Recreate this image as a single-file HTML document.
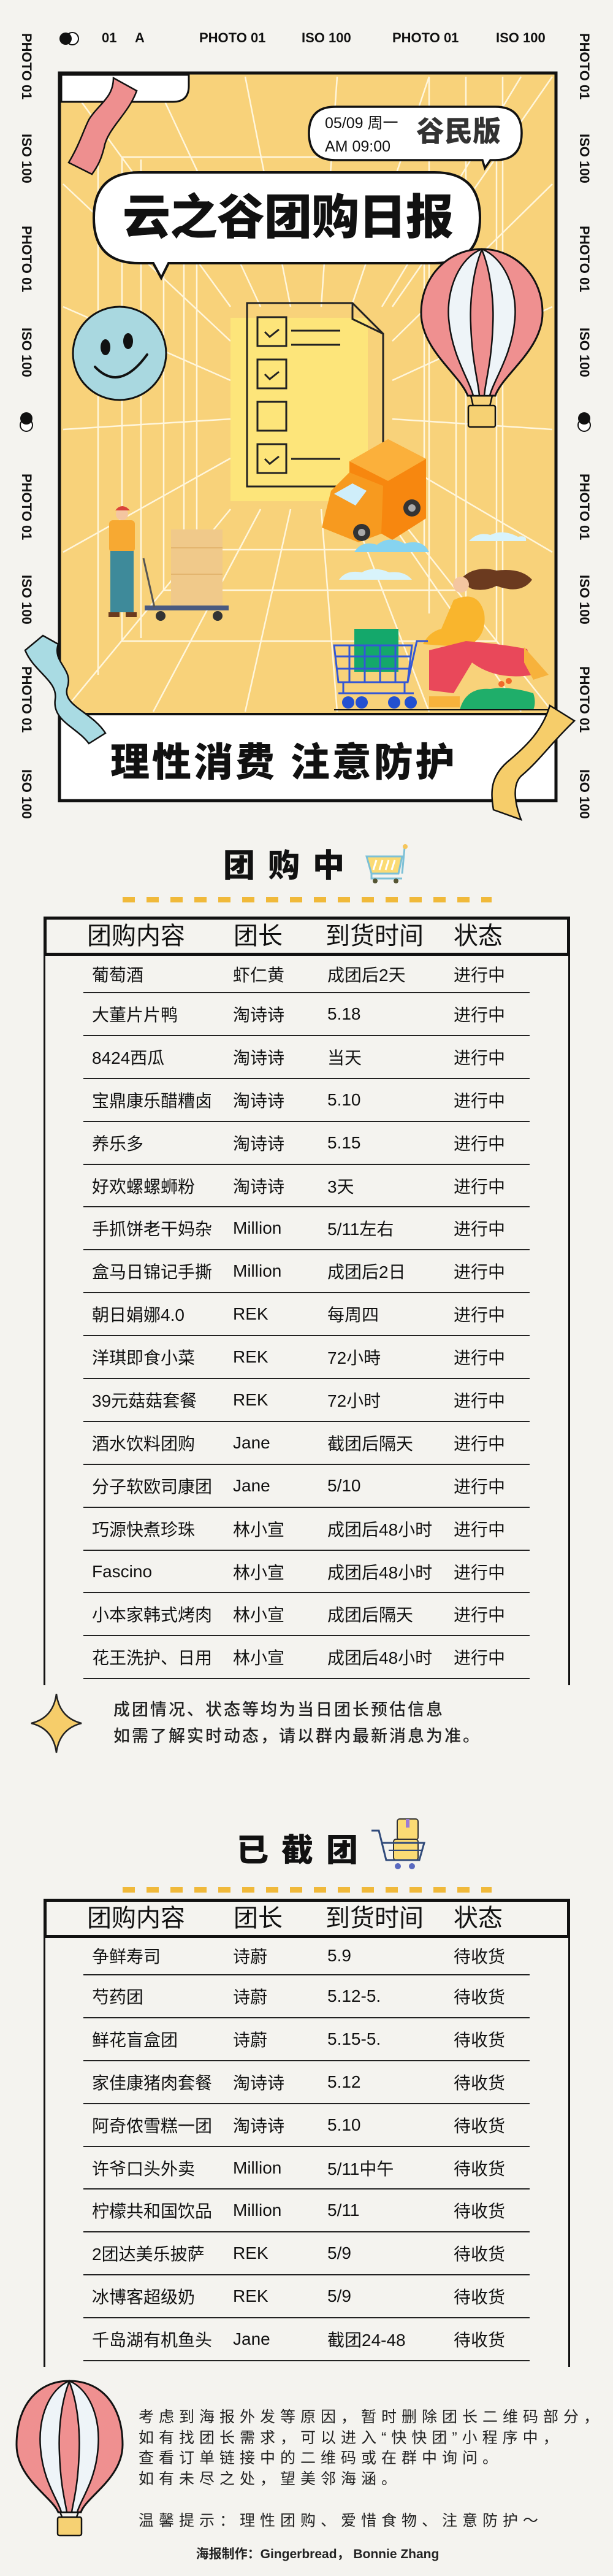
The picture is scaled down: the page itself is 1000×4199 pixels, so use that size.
<!DOCTYPE html>
<html><head><meta charset="utf-8">
<style>
*{margin:0;padding:0;box-sizing:border-box}
html,body{width:1000px;height:4199px;background:#f4f3ef;overflow:hidden}
body{position:relative;font-family:"Liberation Sans","Noto Sans CJK SC",sans-serif;color:#111}
.abs{position:absolute}
.lab{position:absolute;font:bold 22px "Liberation Sans",sans-serif;color:#111;white-space:nowrap;line-height:24px}
.v{writing-mode:vertical-rl;line-height:24px}
.sec{position:absolute;font:900 52px "Liberation Sans","Noto Sans CJK SC",sans-serif;letter-spacing:21px;white-space:nowrap;line-height:60px}
.dashes{position:absolute;left:200px;width:602px;height:9px;background:repeating-linear-gradient(90deg,#f0b93a 0 20px,transparent 20px 39px)}
.thead{position:absolute;left:71px;width:859px;height:64px;border:5px solid #111;background:#f4f3ef}
.thead span{position:absolute;top:0;line-height:54px;font-size:40px;font-family:"Liberation Sans","Noto Sans CJK SC",sans-serif}
.tbody{position:absolute;left:71px;width:859px;border-left:3px solid #111;border-right:3px solid #111}
.row{position:relative;height:69.9px}
.row.first{height:61px}
.row::after{content:"";position:absolute;left:62px;width:728px;bottom:0;height:2px;background:#222}
.row span{position:absolute;top:0;bottom:2px;display:flex;align-items:center;font-size:28px;white-space:nowrap;font-family:"Liberation Sans","Noto Sans CJK SC",sans-serif}
.c1{left:76px}.c2{left:306px}.c3{left:460px}.c4{left:666px}
.note{position:absolute;left:185px;font-size:27px;font-weight:500;letter-spacing:3px;white-space:nowrap;line-height:43px;color:#222}
.fin{position:absolute;left:226px;top:3924px;font-size:25px;letter-spacing:8px;line-height:33.7px;white-space:nowrap;color:#222}
</style></head><body>

<svg class="abs" style="left:94px;top:50px" width="40" height="26"><circle cx="24" cy="13" r="10" fill="#fff" stroke="#111" stroke-width="2"/><circle cx="13" cy="13" r="10" fill="#111"/></svg>
<div class="lab" style="left:166px;top:50px">01</div>
<div class="lab" style="left:220px;top:50px">A</div>
<div class="lab" style="left:325px;top:50px">PHOTO 01</div>
<div class="lab" style="left:492px;top:50px">ISO 100</div>
<div class="lab" style="left:640px;top:50px">PHOTO 01</div>
<div class="lab" style="left:809px;top:50px">ISO 100</div>

<div class="lab v" style="left:31px;top:54px">PHOTO 01</div>
<div class="lab v" style="left:31px;top:218px">ISO 100</div>
<div class="lab v" style="left:31px;top:368px">PHOTO 01</div>
<div class="lab v" style="left:31px;top:534px">ISO 100</div>
<svg class="abs" style="left:30px;top:668px" width="26" height="40"><circle cx="13" cy="25" r="10" fill="#fff" stroke="#111" stroke-width="2"/><circle cx="13" cy="14" r="10" fill="#111"/></svg>
<div class="lab v" style="left:31px;top:772px">PHOTO 01</div>
<div class="lab v" style="left:31px;top:937px">ISO 100</div>
<div class="lab v" style="left:31px;top:1086px">PHOTO 01</div>
<div class="lab v" style="left:31px;top:1254px">ISO 100</div>
<div class="lab v" style="left:941px;top:54px">PHOTO 01</div>
<div class="lab v" style="left:941px;top:218px">ISO 100</div>
<div class="lab v" style="left:941px;top:368px">PHOTO 01</div>
<div class="lab v" style="left:941px;top:534px">ISO 100</div>
<svg class="abs" style="left:940px;top:668px" width="26" height="40"><circle cx="13" cy="25" r="10" fill="#fff" stroke="#111" stroke-width="2"/><circle cx="13" cy="14" r="10" fill="#111"/></svg>
<div class="lab v" style="left:941px;top:772px">PHOTO 01</div>
<div class="lab v" style="left:941px;top:937px">ISO 100</div>
<div class="lab v" style="left:941px;top:1086px">PHOTO 01</div>
<div class="lab v" style="left:941px;top:1254px">ISO 100</div>

<svg class="abs" style="left:0;top:0" width="1000" height="1400" viewBox="0 0 1000 1400">
<rect x="97" y="119" width="810" height="1186" fill="#f8d27a"/>
<g stroke="#fff6dc" stroke-width="2.5" fill="none">
<rect x="199" y="256" width="611" height="789"/>
<rect x="267" y="350" width="477" height="612"/>
<rect x="321" y="425" width="371" height="471"/>
<line x1="103" y1="125" x2="376" y2="500"/><line x1="901" y1="125" x2="640" y2="500"/>
<line x1="103" y1="1160" x2="376" y2="830"/><line x1="901" y1="1160" x2="640" y2="830"/>
<line x1="250" y1="1160" x2="425" y2="830"/><line x1="400" y1="1160" x2="474" y2="830"/><line x1="550" y1="1160" x2="524" y2="830"/><line x1="700" y1="1160" x2="573" y2="830"/><line x1="850" y1="1160" x2="623" y2="830"/>
<line x1="250" y1="125" x2="425" y2="500"/><line x1="400" y1="125" x2="474" y2="500"/><line x1="550" y1="125" x2="524" y2="500"/><line x1="700" y1="125" x2="573" y2="500"/><line x1="850" y1="125" x2="623" y2="500"/>
<line x1="103" y1="300" x2="376" y2="556"/><line x1="103" y1="500" x2="376" y2="620"/><line x1="103" y1="700" x2="376" y2="683"/><line x1="103" y1="900" x2="376" y2="747"/>
<line x1="901" y1="300" x2="640" y2="556"/><line x1="901" y1="500" x2="640" y2="620"/><line x1="901" y1="700" x2="640" y2="683"/><line x1="901" y1="900" x2="640" y2="747"/>
<line x1="700" y1="125" x2="700" y2="1000"/><line x1="760" y1="125" x2="760" y2="1050"/><line x1="820" y1="125" x2="820" y2="1100"/>
<line x1="160" y1="200" x2="160" y2="1100"/><line x1="230" y1="260" x2="230" y2="1040"/><line x1="300" y1="350" x2="300" y2="960"/>
</g>
<path d="M100,122 H308 V140 Q308,166 282,166 H100Z" fill="#fff" stroke="#111" stroke-width="3"/>
<path d="M185,127 L223,148 C210,185 175,210 170,240 C165,260 160,270 150,284 L112,265 C130,235 135,215 145,195 C160,170 185,160 185,127Z" fill="#ee8f8f" stroke="#111" stroke-width="2.5"/>
<path d="M547,174 H808 Q851,174 851,217 Q851,261 808,261 H800 L791,274 L787,261 H547 Q504,261 504,217 Q504,174 547,174Z" fill="#fff" stroke="#111" stroke-width="3.5"/>
<path d="M227,281 H709 Q783,281 783,355 Q783,429 709,429 H275 L263,453 L250,429 H227 Q153,429 153,355 Q153,281 227,281Z" fill="#fff" stroke="#111" stroke-width="4"/>
<circle cx="195" cy="576" r="76" fill="#a9d8e0" stroke="#111" stroke-width="3"/>
<ellipse cx="172" cy="566" rx="8" ry="13" fill="#111"/><ellipse cx="209" cy="556" rx="8" ry="13" fill="#111"/>
<path d="M155,598 Q195,640 240,578" fill="none" stroke="#111" stroke-width="4" stroke-linecap="round"/>
<rect x="376" y="518" width="224" height="299" fill="#fde57a"/>
<path d="M403,494 H575 L625,544 V793 H403Z" fill="none" stroke="#222" stroke-width="3"/>
<path d="M575,494 V520 L625,544" fill="none" stroke="#222" stroke-width="3"/>
<g fill="none" stroke="#222" stroke-width="3">
<rect x="420" y="517" width="47" height="47"/><rect x="420" y="586" width="47" height="47"/><rect x="420" y="655" width="47" height="47"/><rect x="420" y="724" width="47" height="47"/>
<path d="M432,541 l8,8 l15,-12"/><path d="M432,610 l8,8 l15,-12"/><path d="M432,748 l8,8 l15,-12"/>
<line x1="475" y1="539" x2="555" y2="539"/><line x1="475" y1="562" x2="555" y2="562"/><line x1="475" y1="748" x2="555" y2="748"/>
</g>
<polygon points="570,752 633,716 695,748 695,845 640,880 570,840" fill="#f7870f"/>
<polygon points="570,752 633,716 695,748 633,784" fill="#fbb03b"/>
<polygon points="540,800 570,770 625,792 622,870 585,884 525,860" fill="#f79a1f"/>
<polygon points="545,805 575,788 598,800 580,824" fill="#cfeefa"/>
<circle cx="590" cy="868" r="14" fill="#333"/><circle cx="590" cy="868" r="6" fill="#aaa"/>
<circle cx="672" cy="828" r="14" fill="#333"/><circle cx="672" cy="828" r="6" fill="#aaa"/>
<path d="M578,900 Q590,880 615,888 Q635,872 660,886 Q690,878 700,900Z" fill="#86d3f0"/>
<path d="M553,945 Q565,928 590,933 Q610,922 635,933 Q660,930 672,945Z" fill="#d8f3fb"/>
<path d="M765,882 Q780,866 800,872 Q820,862 845,875 Q860,872 858,882Z" fill="#d8f3fb"/>
<rect x="279" y="863" width="84" height="130" fill="#f0c98a"/>
<line x1="279" y1="893" x2="363" y2="893" stroke="#e3b56f" stroke-width="2"/><line x1="279" y1="936" x2="363" y2="936" stroke="#e3b56f" stroke-width="2"/>
<rect x="236" y="987" width="137" height="8" fill="#4a5a80"/>
<circle cx="262" cy="1004" r="8" fill="#333"/><circle cx="355" cy="1004" r="8" fill="#333"/>
<line x1="234" y1="910" x2="252" y2="990" stroke="#555" stroke-width="3"/>
<circle cx="199" cy="838" r="10" fill="#f4c6a0"/><path d="M188,832 Q199,818 212,832Z" fill="#d9433a"/>
<rect x="178" y="848" width="42" height="52" rx="6" fill="#f7a932"/>
<rect x="180" y="898" width="38" height="100" fill="#3e8a9a"/>
<rect x="177" y="998" width="18" height="8" fill="#6b3b1e"/><rect x="205" y="998" width="18" height="8" fill="#6b3b1e"/>
<path d="M748,948 Q770,920 810,930 Q850,925 868,945 Q850,970 810,955 Q790,965 770,960Z" fill="#6b3a1f"/>
<circle cx="752" cy="953" r="13" fill="#f4c6a0"/>
<path d="M740,978 Q780,960 790,1000 Q795,1040 760,1055 L690,1050 Q700,1030 720,1025Z" fill="#f9b52d"/>
<path d="M700,1060 L760,1045 Q820,1050 860,1058 L870,1100 Q810,1110 770,1080 L740,1130 L700,1125Z" fill="#e9485a"/>
<rect x="700" y="1135" width="50" height="18" fill="#f7b23c"/>
<path d="M855,1055 L895,1100 L870,1108 L855,1080Z" fill="#f7b23c"/>
<rect x="578" y="1025" width="72" height="70" fill="#14a86b"/>
<g stroke="#3357d6" stroke-width="3" fill="none"><path d="M545,1052 H672 L665,1112 H552Z"/><path d="M548,1070 H670 M550,1090 H668"/><path d="M570,1052 V1112 M595,1052 V1112 M620,1052 V1112 M645,1052 V1112"/><path d="M665,1112 L680,1045 H698 M552,1130 H675 M560,1112 V1130 M660,1112 V1130"/></g>
<circle cx="568" cy="1145" r="10" fill="#2350d0"/><circle cx="590" cy="1145" r="10" fill="#2350d0"/><circle cx="643" cy="1145" r="10" fill="#2350d0"/><circle cx="670" cy="1145" r="10" fill="#2350d0"/>
<path d="M750,1157 Q760,1120 800,1123 Q830,1118 870,1130 Q875,1145 870,1157Z" fill="#1fae6a"/>
<circle cx="818" cy="1115" r="5" fill="#f06a2a"/><circle cx="830" cy="1110" r="5" fill="#f06a2a"/>
<line x1="545" y1="1157" x2="895" y2="1157" stroke="#111" stroke-width="2"/>
<path d="M786,406 C840,406 885,450 885,510 C885,570 820,610 808,645 L763,645 C750,610 687,570 687,510 C687,450 732,406 786,406Z" fill="#ef9090" stroke="#111" stroke-width="3"/>
<path d="M786,406 C750,420 728,470 732,520 C737,580 766,620 772,645 L799,645 C805,620 835,580 840,520 C844,470 822,420 786,406Z" fill="#eef4f8" stroke="#111" stroke-width="2.5"/>
<path d="M786,407 C772,440 766,490 768,530 C770,590 780,620 782,645 L790,645 C792,620 802,590 804,530 C806,490 800,440 786,407Z" fill="#ef9090" stroke="#111" stroke-width="2.5"/>
<path d="M768,645 L772,662 M803,645 L799,662" stroke="#111" stroke-width="2.5"/>
<rect x="764" y="661" width="44" height="35" rx="3" fill="#f6d173" stroke="#111" stroke-width="2.5"/>
<rect x="99" y="1164" width="806" height="139" fill="#fff"/>
<line x1="97" y1="1164" x2="907" y2="1164" stroke="#111" stroke-width="4"/>
<rect x="97" y="119" width="810" height="1186" fill="none" stroke="#111" stroke-width="5"/>
<path d="M70,1036 L95,1050 C85,1080 120,1090 110,1120 C100,1150 150,1160 172,1195 L145,1212 C125,1185 85,1175 90,1140 C95,1110 55,1095 41,1060Z" fill="#a9dbe3" stroke="#111" stroke-width="2.5"/>
<path d="M897,1150 L937,1175 C900,1210 880,1240 850,1265 C835,1280 840,1310 850,1336 L805,1320 C800,1290 800,1265 830,1240 C860,1215 885,1190 897,1150Z" fill="#f6cd6a" stroke="#111" stroke-width="2.5"/>
</svg>

<div class="abs" style="left:530px;top:186px;font-size:25px;line-height:30px;white-space:nowrap">05/09 周一</div>
<div class="abs" style="left:530px;top:224px;font-size:25px;line-height:30px;white-space:nowrap">AM 09:00</div>
<div class="abs" style="left:679px;top:186px;font-size:46px;font-weight:900;color:#333;line-height:56px;white-space:nowrap">谷民版</div>
<div class="abs" style="left:200px;top:308px;font-size:78px;font-weight:900;line-height:92px;letter-spacing:-1px;white-space:nowrap">云之谷团购日报</div>
<div class="abs" style="left:180px;top:1205px;font-size:64px;font-weight:900;line-height:76px;letter-spacing:4px;white-space:nowrap">理性消费 注意防护</div>

<div class="sec" style="left:364px;top:1382px">团购中</div>
<svg class="abs" style="left:594px;top:1374px" width="74" height="70" viewBox="0 0 74 70"><path d="M4,22 H62 L56,50 H12Z" fill="#fbdb74" stroke="#7cc0d6" stroke-width="3"/><path d="M20,28 l-5,16 M30,28 l-5,16 M40,28 l-5,16 M50,28 l-5,16" stroke="#fff" stroke-width="3"/><path d="M62,50 L66,8 M12,50 V58 H62" stroke="#7cc0d6" stroke-width="3" fill="none"/><circle cx="67" cy="6" r="4" fill="#f5c55a"/><circle cx="18" cy="62" r="4" fill="#553"/><circle cx="52" cy="62" r="4" fill="#553"/></svg>
<div class="dashes" style="top:1462px"></div>

<div class="thead" style="top:1494px"><span style="left:66px">团购内容</span><span style="left:305px">团长</span><span style="left:455px">到货时间</span><span style="left:664px">状态</span></div>
<div class="tbody" style="top:1558px;height:1189px">
<div class="row first"><span class="c1">葡萄酒</span><span class="c2">虾仁黄</span><span class="c3">成团后2天</span><span class="c4">进行中</span></div>
<div class="row"><span class="c1">大董片片鸭</span><span class="c2">淘诗诗</span><span class="c3">5.18</span><span class="c4">进行中</span></div>
<div class="row"><span class="c1">8424西瓜</span><span class="c2">淘诗诗</span><span class="c3">当天</span><span class="c4">进行中</span></div>
<div class="row"><span class="c1">宝鼎康乐醋糟卤</span><span class="c2">淘诗诗</span><span class="c3">5.10</span><span class="c4">进行中</span></div>
<div class="row"><span class="c1">养乐多</span><span class="c2">淘诗诗</span><span class="c3">5.15</span><span class="c4">进行中</span></div>
<div class="row"><span class="c1">好欢螺螺蛳粉</span><span class="c2">淘诗诗</span><span class="c3">3天</span><span class="c4">进行中</span></div>
<div class="row"><span class="c1">手抓饼老干妈杂</span><span class="c2">Million</span><span class="c3">5/11左右</span><span class="c4">进行中</span></div>
<div class="row"><span class="c1">盒马日锦记手撕</span><span class="c2">Million</span><span class="c3">成团后2日</span><span class="c4">进行中</span></div>
<div class="row"><span class="c1">朝日娟娜4.0</span><span class="c2">REK</span><span class="c3">每周四</span><span class="c4">进行中</span></div>
<div class="row"><span class="c1">洋琪即食小菜</span><span class="c2">REK</span><span class="c3">72小時</span><span class="c4">进行中</span></div>
<div class="row"><span class="c1">39元菇菇套餐</span><span class="c2">REK</span><span class="c3">72小时</span><span class="c4">进行中</span></div>
<div class="row"><span class="c1">酒水饮料团购</span><span class="c2">Jane</span><span class="c3">截团后隔天</span><span class="c4">进行中</span></div>
<div class="row"><span class="c1">分子软欧司康团</span><span class="c2">Jane</span><span class="c3">5/10</span><span class="c4">进行中</span></div>
<div class="row"><span class="c1">巧源快煮珍珠</span><span class="c2">林小宣</span><span class="c3">成团后48小时</span><span class="c4">进行中</span></div>
<div class="row"><span class="c1">Fascino</span><span class="c2">林小宣</span><span class="c3">成团后48小时</span><span class="c4">进行中</span></div>
<div class="row"><span class="c1">小本家韩式烤肉</span><span class="c2">林小宣</span><span class="c3">成团后隔天</span><span class="c4">进行中</span></div>
<div class="row"><span class="c1">花王洗护、日用</span><span class="c2">林小宣</span><span class="c3">成团后48小时</span><span class="c4">进行中</span></div>
</div>

<svg class="abs" style="left:48px;top:2758px" width="90" height="102"><path d="M44,3 Q49,42 85,51 Q49,60 44,99 Q39,60 3,51 Q39,42 44,3Z" fill="#f6cd6a" stroke="#222" stroke-width="2.5"/></svg>
<div class="note" style="top:2766px">成团情况、状态等均为当日团长预估信息</div>
<div class="note" style="top:2809px">如需了解实时动态，请以群内最新消息为准。</div>

<div class="sec" style="left:386px;top:2987px">已截团</div>
<svg class="abs" style="left:604px;top:2962px" width="90" height="86" viewBox="0 0 90 86"><rect x="44" y="3" width="34" height="34" rx="4" fill="#fbdb74" stroke="#333" stroke-width="2"/><rect x="58" y="3" width="6" height="14" fill="#9b7cd6"/><rect x="38" y="36" width="40" height="34" rx="4" fill="#fbdb74" stroke="#333" stroke-width="2"/><path d="M2,22 H14 L26,70 H80 L88,42 H18" fill="none" stroke="#304a7a" stroke-width="3"/><path d="M30,54 H84" stroke="#304a7a" stroke-width="2"/><circle cx="45" cy="80" r="5" fill="#5a6ac0"/><circle cx="68" cy="80" r="5" fill="#5a6ac0"/></svg>
<div class="dashes" style="top:3076px"></div>

<div class="thead" style="top:3095px"><span style="left:66px">团购内容</span><span style="left:305px">团长</span><span style="left:455px">到货时间</span><span style="left:664px">状态</span></div>
<div class="tbody" style="top:3158px;height:700px">
<div class="row" style="height:62px"><span class="c1">争鲜寿司</span><span class="c2">诗蔚</span><span class="c3">5.9</span><span class="c4">待收货</span></div>
<div class="row"><span class="c1">芍药团</span><span class="c2">诗蔚</span><span class="c3">5.12-5.</span><span class="c4">待收货</span></div>
<div class="row"><span class="c1">鲜花盲盒团</span><span class="c2">诗蔚</span><span class="c3">5.15-5.</span><span class="c4">待收货</span></div>
<div class="row"><span class="c1">家佳康猪肉套餐</span><span class="c2">淘诗诗</span><span class="c3">5.12</span><span class="c4">待收货</span></div>
<div class="row"><span class="c1">阿奇侬雪糕一团</span><span class="c2">淘诗诗</span><span class="c3">5.10</span><span class="c4">待收货</span></div>
<div class="row"><span class="c1">许爷口头外卖</span><span class="c2">Million</span><span class="c3">5/11中午</span><span class="c4">待收货</span></div>
<div class="row"><span class="c1">柠檬共和国饮品</span><span class="c2">Million</span><span class="c3">5/11</span><span class="c4">待收货</span></div>
<div class="row"><span class="c1">2团达美乐披萨</span><span class="c2">REK</span><span class="c3">5/9</span><span class="c4">待收货</span></div>
<div class="row"><span class="c1">冰博客超级奶</span><span class="c2">REK</span><span class="c3">5/9</span><span class="c4">待收货</span></div>
<div class="row"><span class="c1">千岛湖有机鱼头</span><span class="c2">Jane</span><span class="c3">截团24-48</span><span class="c4">待收货</span></div>
</div>

<svg class="abs" style="left:0;top:3870px" width="220" height="280" viewBox="0 3870 220 280">
<path d="M113,3881 C165,3881 200,3920 200,3985 C200,4040 140,4070 132,4095 L95,4095 C85,4070 27,4040 27,3985 C27,3920 62,3881 113,3881Z" fill="#ef9090" stroke="#111" stroke-width="3"/>
<path d="M113,3881 C80,3895 62,3940 66,3990 C70,4045 95,4075 100,4095 L126,4095 C131,4075 156,4045 160,3990 C164,3940 146,3895 113,3881Z" fill="#eef4f8" stroke="#111" stroke-width="2.5"/>
<path d="M113,3882 C100,3915 95,3960 97,4000 C99,4055 107,4080 109,4095 L117,4095 C119,4080 127,4055 129,4000 C131,3960 126,3915 113,3882Z" fill="#ef9090" stroke="#111" stroke-width="2.5"/>
<path d="M98,4095 L102,4105 M128,4095 L124,4105" stroke="#111" stroke-width="2.5"/>
<rect x="94" y="4103" width="39" height="30" rx="3" fill="#f6d173" stroke="#111" stroke-width="2.5"/>
</svg>
<div class="fin">考虑到海报外发等原因，暂时删除团长二维码部分，<br>如有找团长需求，可以进入“快快团”小程序中，<br>查看订单链接中的二维码或在群中询问。<br>如有未尽之处，望美邻海涵。<br><br>温馨提示：理性团购、爱惜食物、注意防护～</div>
<div class="abs" style="left:312px;top:4150px;width:412px;text-align:center;font-size:21px;font-weight:700;line-height:28px;white-space:nowrap;color:#222">海报制作：Gingerbread， Bonnie Zhang</div>
</body></html>
